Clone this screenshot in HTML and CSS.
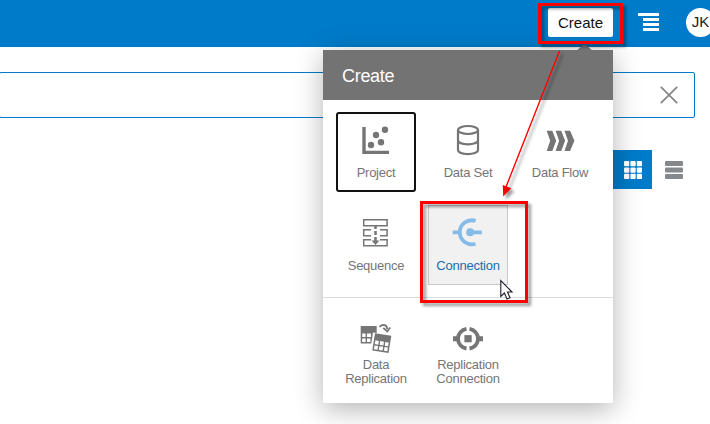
FILE: index.html
```html
<!DOCTYPE html>
<html lang="en">
<head>
<meta charset="utf-8">
<title>Create</title>
<link rel="stylesheet" href="styles.css">
</head>
<body>
<header class="topbar">
  <button class="create-btn">Create</button>
  <svg class="menu-icon" width="21" height="18" viewBox="0 0 21 18"><path d="M0 1.5H21M5 6.5H21M5 11.5H21M5 16.5H21" stroke="#fff" stroke-width="2.8"/></svg>
  <div class="avatar">JK</div>
</header>
<main>
  <div class="search">
    <svg width="18" height="18" viewBox="0 0 18 18"><path d="M.8.8L17.2 17.2M17.2.8L.8 17.2" stroke="#858789" stroke-width="1.8"/></svg>
  </div>
  <div class="views">
    <div class="view active"><svg width="18" height="18" viewBox="0 0 18 18" fill="#fff"><rect width="5.3" height="5.3" rx="1"/><rect x="6.4" width="5.3" height="5.3" rx="1"/><rect x="12.8" width="5.3" height="5.3" rx="1"/><rect y="6.4" width="5.3" height="5.3" rx="1"/><rect x="6.4" y="6.4" width="5.3" height="5.3" rx="1"/><rect x="12.8" y="6.4" width="5.3" height="5.3" rx="1"/><rect y="12.8" width="5.3" height="5.3" rx="1"/><rect x="6.4" y="12.8" width="5.3" height="5.3" rx="1"/><rect x="12.8" y="12.8" width="5.3" height="5.3" rx="1"/></svg></div>
    <div class="view"><svg width="18" height="18" viewBox="0 0 18 18" fill="#85898c"><rect width="18" height="5" rx="1"/><rect y="6.5" width="18" height="5" rx="1"/><rect y="13" width="18" height="5" rx="1"/></svg></div>
  </div>
</main>
<section class="popup">
  <h2>Create</h2>
  <div class="tiles">
    <div class="tile focused">
      <svg viewBox="0 0 40 40"><path d="M8 7V32.4H33" fill="none" stroke="#757575" stroke-width="3.4"/><g fill="#757575"><circle cx="15" cy="25" r="3.2"/><circle cx="25" cy="22.3" r="3.2"/><circle cx="20" cy="15" r="3.2"/><circle cx="29" cy="9.7" r="3.2"/></g></svg>
      <span>Project</span>
    </div>
    <div class="tile">
      <svg viewBox="0 0 40 40"><g fill="none" stroke="#757575" stroke-width="2.2"><ellipse cx="20" cy="10" rx="10" ry="4"/><path d="M10 10V30C10 35.4 30 35.4 30 30V10M10 20.3C10 25.6 30 25.6 30 20.3"/></g></svg>
      <span>Data Set</span>
    </div>
    <div class="tile">
      <svg viewBox="0 0 40 40"><path d="M6.7 10.7H12.3L16.2 20.7L12.3 31H6.7L10.2 20.7ZM15.6 10.7H21.2L25.1 20.7L21.2 31H15.6L19.1 20.7ZM24.5 10.7H30.1L34.4 20.7L30.1 31H24.5L28 20.7Z" fill="#757575"/></svg>
      <span>Data Flow</span>
    </div>
    <div class="tile">
      <svg viewBox="0 0 40 40"><g fill="none" stroke="#757575" stroke-width="1.5"><path d="M7.7 6.7H31.1V12.7H7.7ZM15 16.7H7.7V22.7H15M24 16.7H31.1V22.7H24M15 26.7H7.7V32.7H31.1V26.7H24"/><path d="M19.5 13V16M19.5 18V22M19.5 24V28" stroke-width="2.5"/></g><path d="M15.5 27.5H23.5L19.5 32Z" fill="#757575"/></svg>
      <span>Sequence</span>
    </div>
    <div class="tile hovered">
      <svg viewBox="0 0 40 40"><g fill="none" stroke="#85bbe7" stroke-width="3.8"><path d="M27.5 7.9A12 12 0 1 0 27.5 30.7M4.7 19.3H10.5M23 19.3H33.8"/></g><circle cx="22.2" cy="19.3" r="4" fill="#85bbe7"/></svg>
      <span>Connection</span>
    </div>
  </div>
  <div class="tiles replication">
    <div class="tile">
      <svg viewBox="0 0 40 40"><path d="M4.7 8H20.7V15L17 14.5L15.3 25.5H4.7Z" fill="#757575"/><path d="M6.2 15.5H9.6V19H6.2ZM11 15.5H15V19H11ZM6.2 20.5H9.6V24H6.2ZM11 20.5H14.4V24H11Z" fill="#fff"/><g transform="translate(19 15.2) rotate(9)"><path d="M0 0H16.5V17.5H0Z" fill="#757575"/><path d="M1.5 7H5V10.8H1.5ZM6.4 7H10.2V10.8H6.4ZM11.6 7H15V10.8H11.6ZM1.5 12.2H5V16H1.5ZM6.4 12.2H10.2V16H6.4ZM11.6 12.2H15V16H11.6Z" fill="#fff"/></g><path d="M23.5 8.7C27 5.8 31 6.7 31.2 11" fill="none" stroke="#757575" stroke-width="1.8"/><path d="M27.3 9.8L31.3 13.5L34.2 9.5" fill="none" stroke="#757575" stroke-width="1.8"/></svg>
      <span>Data<br>Replication</span>
    </div>
    <div class="tile">
      <svg viewBox="0 0 40 40"><g fill="none" stroke="#757575"><path d="M18.5 10.9A9.9 9.9 0 0 0 18.5 30.5M21.5 10.9A9.9 9.9 0 0 1 21.5 30.5" stroke-width="3.8"/><path d="M5 20.7H9M31 20.7H35" stroke-width="5"/></g><path d="M16.4 17.1H23.7V24.3H16.4Z" fill="#757575"/></svg>
      <span>Replication<br>Connection</span>
    </div>
  </div>
</section>
<svg class="annotations" width="710" height="424" viewBox="0 0 710 424">
  <path d="M576 51L583 45H586L593 51Z" fill="#737373"/>
  <g class="marks">
    <rect x="539.5" y="4.5" width="82" height="38" fill="none" stroke="#f00" stroke-width="3"/>
    <rect x="421.5" y="202.5" width="105" height="99" fill="none" stroke="#f00" stroke-width="3"/>
    <path d="M559.5 51L506 187" stroke="#f00" stroke-width="1.4"/>
    <path d="M502.8 185L511.3 188.2L503.2 196.5Z" fill="#f00"/>
  </g>
  <path d="M500.8 280.5V296.5L504.4 293L507 299L510 297.7L507.5 292H512Z" fill="#fff" stroke="#1c1c2c" stroke-width="1.1"/>
</svg>
</body>
</html>
```

FILE: styles.css
```css
* { box-sizing: border-box; }
body {
  margin: 0;
  height: 424px;
  overflow: hidden;
  position: relative;
  background: #fff;
  font-family: "Liberation Sans", Arial, sans-serif;
}
.topbar {
  height: 47px;
  background: #007bc9;
  display: flex;
  align-items: flex-start;
  padding-left: 548px;
}
.create-btn {
  flex: none;
  width: 65px;
  height: 29px;
  margin-top: 8px;
  padding: 0;
  border: 0;
  border-radius: 2px;
  background: #fff;
  color: #111;
  font: 15px "Liberation Sans", Arial, sans-serif;
}
.menu-icon { flex: none; margin: 13px 0 0 25px; }
.avatar {
  flex: none;
  width: 29px;
  height: 29px;
  margin: 8px 0 0 27px;
  border-radius: 50%;
  background: #fff;
  color: #222;
  font-size: 15px;
  line-height: 28px;
  text-align: center;
}
.search {
  width: 696px;
  height: 46px;
  margin: 25px 0 0 -1px;
  border: 1px solid #007bc9;
  border-radius: 2px;
  display: flex;
  align-items: center;
  justify-content: flex-end;
  padding-right: 16px;
}
.views {
  display: flex;
  margin: 32px 0 0 613px;
}
.view {
  width: 39px;
  height: 39px;
  display: flex;
  align-items: center;
  justify-content: center;
}
.view.active { background: #007bc9; }
.view + .view { margin-left: 2px; }
.popup {
  position: absolute;
  left: 323px;
  top: 50px;
  width: 290px;
  height: 353px;
  background: #fff;
  box-shadow: 0 6px 26px rgba(0, 0, 0, .3);
}
h2 {
  margin: 0;
  height: 50px;
  padding-left: 19px;
  background: #737373;
  color: #fff;
  font-size: 18px;
  font-weight: 400;
  letter-spacing: -.3px;
  line-height: 52px;
}
.tiles {
  display: grid;
  grid-template-columns: repeat(3, 80px);
  grid-auto-rows: 80px;
  gap: 13px 12px;
  padding: 12px 13px;
}
.replication {
  border-top: 1px solid #d9dde0;
}
.tile {
  display: flex;
  flex-direction: column;
  align-items: center;
  padding-top: 8px;
  color: #757575;
  font-size: 13px;
  letter-spacing: -.25px;
  line-height: 14px;
  text-align: center;
}
.tile svg { width: 40px; height: 40px; flex: none; }
.tile span { margin-top: 6px; white-space: nowrap; }
.focused { box-shadow: inset 0 0 0 2px #111; border-radius: 3px; }
.hovered {
  box-shadow: inset 0 0 0 1px #c8c8c8;
  background: #f1f1f1;
  color: #1670ab;
}
.replication .tile span { margin-top: 0; }
.annotations {
  position: absolute;
  left: 0;
  top: 0;
}
.marks { filter: drop-shadow(3px 3px 1.5px rgba(0, 0, 0, .4)); }
```
